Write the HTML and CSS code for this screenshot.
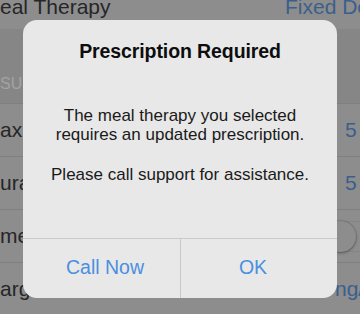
FILE: index.html
```html
<!DOCTYPE html>
<html>
<head>
<meta charset="utf-8">
<link rel="stylesheet" href="styles.css">
</head>
<body>
<div class="screen">
  <div class="row row-top">
    <span class="label">eal Therapy</span>
    <span class="value value-top">Fixed Dose</span>
  </div>
  <div class="section-header"><span>SUMMARY</span></div>
  <div class="row">
    <span class="label">ax</span>
    <span class="value">5</span>
  </div>
  <div class="row">
    <span class="label">ura</span>
    <span class="value">5</span>
  </div>
  <div class="row">
    <span class="label">me</span>
    <span class="toggle"><span class="knob"></span></span>
  </div>
  <div class="row row-last">
    <span class="label">arg</span>
    <span class="value value-unit">ng/d</span>
  </div>

  <div class="alert">
    <div class="alert-body">
      <div class="alert-title">Prescription Required</div>
      <p class="alert-msg">The meal therapy you selected<br>requires an updated prescription.</p>
      <p class="alert-msg alert-msg2">Please call support for assistance.</p>
    </div>
    <div class="alert-actions">
      <div class="alert-btn alert-btn-left">Call Now</div>
      <div class="alert-btn alert-btn-right">OK</div>
    </div>
  </div>
</div>
</body>
</html>
```

FILE: styles.css
```css
html, body {
  margin: 0;
  padding: 0;
}
body {
  width: 360px;
  height: 314px;
  overflow: hidden;
  background: #8a8a8a;
  font-family: "Liberation Sans", Arial, sans-serif;
}
.screen {
  position: relative;
  width: 360px;
  height: 314px;
  overflow: hidden;
  background: #878787;
}
.row {
  display: flex;
  align-items: center;
  height: 52px;
  border-bottom: 1px solid #7f7f7f;
  background: #8d8d8d;
  position: relative;
}
.row-top {
  height: 29px;
  align-items: flex-start;
  border-bottom: none;
}
.row-last {
  border-bottom: none;
}
.label {
  font-size: 21px;
  color: #262626;
  line-height: 24px;
  white-space: nowrap;
}
.row-top .label {
  line-height: 19px;
  margin-top: -3px;
}
.value {
  margin-left: auto;
  font-size: 21px;
  color: #3b5f8c;
  white-space: nowrap;
  width: 15px;
  line-height: 24px;
}
.value-top {
  width: 75px;
  line-height: 19px;
  margin-top: -3px;
}
.value-unit {
  width: 25px;
}
.section-header {
  background: #868686;
  border-bottom: 1px solid #7f7f7f;
  display: flex;
  align-items: flex-end;
  padding-bottom: 10px;
  box-sizing: border-box;
  height: 75px;
}
.section-header span {
  font-size: 16px;
  color: #a2a2a2;
  line-height: 18px;
}
.toggle {
  margin-left: auto;
  margin-right: -16px;
  width: 51px;
  height: 31px;
  border-radius: 16px;
  background: #8d8d8d;
  box-shadow: inset 0 0 0 1px #858585;
  position: relative;
}
.knob {
  position: absolute;
  left: 0;
  top: 0;
  width: 31px;
  height: 31px;
  border-radius: 50%;
  background: #8d8d8d;
  box-shadow: 0 1px 3px rgba(0,0,0,0.35), 0 0 0 1px rgba(0,0,0,0.08);
}
.alert {
  position: absolute;
  left: 23px;
  top: 20px;
  width: 314px;
  height: 278px;
  border-radius: 14px;
  background: #e8e8e8;
  display: flex;
  flex-direction: column;
  overflow: hidden;
}
.alert-body {
  flex: 1;
  text-align: center;
  padding-top: 20px;
  box-sizing: border-box;
}
.alert-title {
  font-size: 19.5px;
  font-weight: bold;
  color: #0d0d0d;
  line-height: 23px;
  letter-spacing: -0.1px;
}
.alert-msg {
  margin: 43px 0 0;
  font-size: 17px;
  line-height: 19px;
  color: #1a1a1a;
}
.alert-msg2 {
  margin-top: 21px;
}
.alert-actions {
  height: 59px;
  border-top: 1px solid #c9c9c9;
  display: flex;
}
.alert-btn {
  flex: none;
  width: 50%;
  box-sizing: border-box;
  display: flex;
  align-items: center;
  justify-content: center;
  font-size: 19.5px;
  color: #4a8fe0;
  padding-bottom: 2px;
}
.alert-btn-left {
  padding-left: 7px;
}
.alert-btn-right {
  padding-right: 12px;
}
.alert-btn + .alert-btn {
  border-left: 1px solid #c9c9c9;
}
```
